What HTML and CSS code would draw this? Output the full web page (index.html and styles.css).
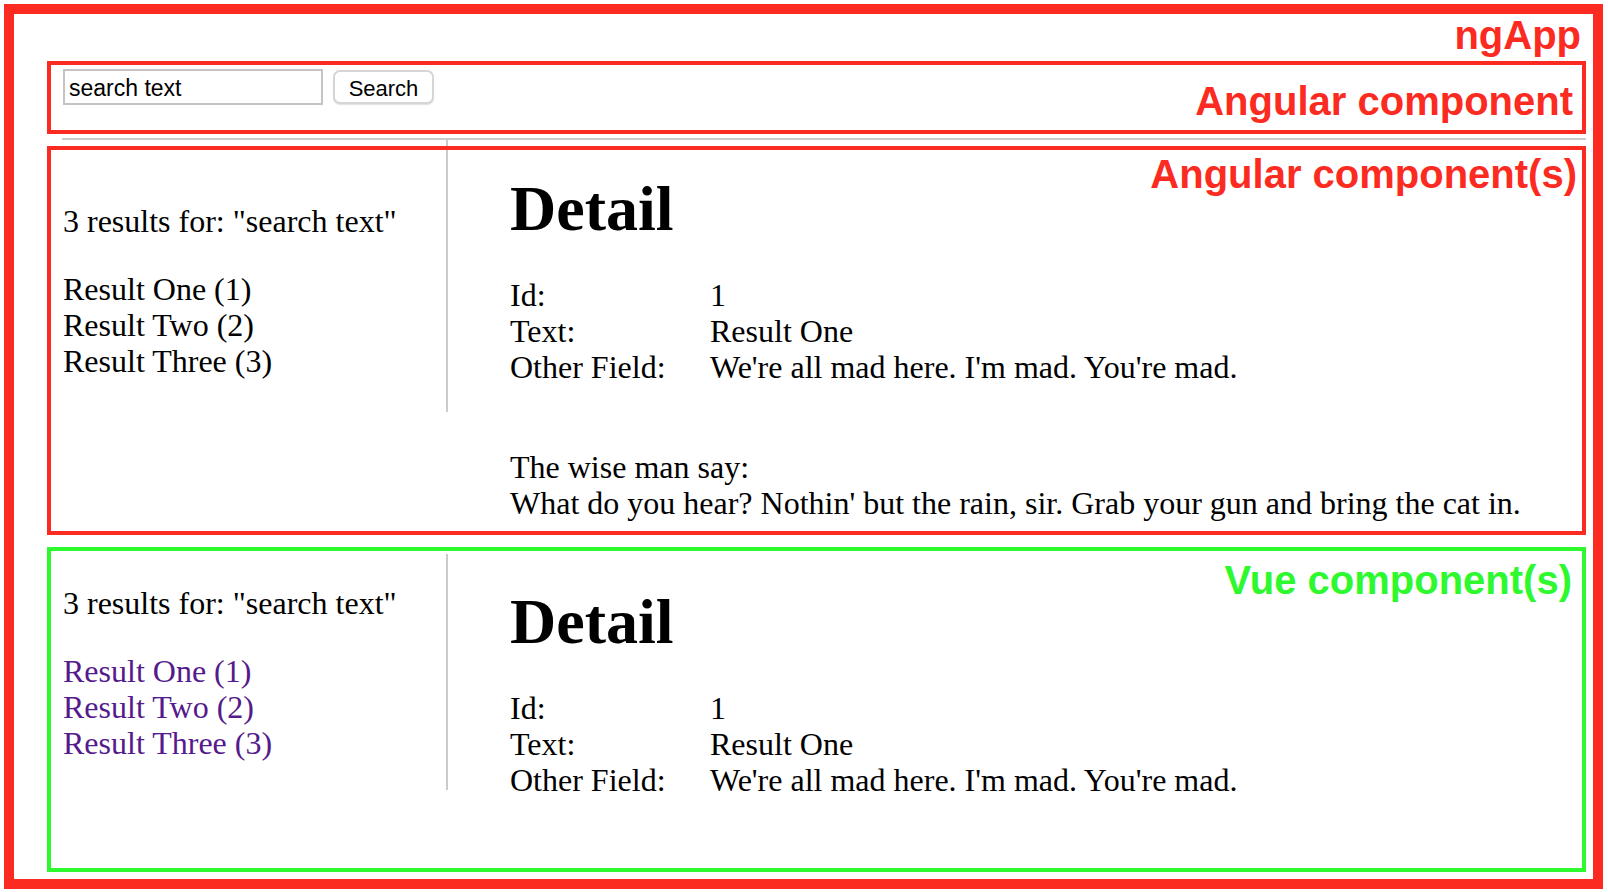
FILE: index.html
```html
<!DOCTYPE html>
<html lang="en">
<head>
<meta charset="utf-8">
<title>ngApp with Angular and Vue components</title>
<link rel="stylesheet" href="styles.css">
</head>
<body>
<div class="ng-app">
  <span class="label label-red label-ngapp">ngApp</span>

  <div class="search-box">
    <span class="label label-red label-search">Angular component</span>
    <div class="search-row">
      <input class="search-input" type="text" value="search text">
      <button class="search-btn" type="button">Search</button>
    </div>
  </div>

  <div class="header-rule"></div>

  <div class="component-box box-angular">
    <span class="label label-red label-angular">Angular component(s)</span>
    <div class="results-layout">
      <aside class="sidebar">
        <p class="summary">3 results for: "search text"</p>
        <ul class="result-list">
          <li>Result One (1)</li>
          <li>Result Two (2)</li>
          <li>Result Three (3)</li>
        </ul>
      </aside>
      <section class="detail">
        <h1 class="detail-title">Detail</h1>
        <div class="fields">
          <span>Id:</span><span>1</span>
          <span>Text:</span><span>Result One</span>
          <span>Other Field:</span><span>We're all mad here. I'm mad. You're mad.</span>
        </div>
        <div class="wise">
          <p>The wise man say:</p>
          <p>What do you hear? Nothin' but the rain, sir. Grab your gun and bring the cat in.</p>
        </div>
      </section>
    </div>
  </div>

  <div class="component-box box-vue">
    <span class="label label-green label-vue">Vue component(s)</span>
    <div class="results-layout">
      <aside class="sidebar">
        <p class="summary">3 results for: "search text"</p>
        <ul class="result-list">
          <li><a class="result-link" href="#1">Result One (1)</a></li>
          <li><a class="result-link" href="#2">Result Two (2)</a></li>
          <li><a class="result-link" href="#3">Result Three (3)</a></li>
        </ul>
      </aside>
      <section class="detail">
        <h1 class="detail-title">Detail</h1>
        <div class="fields">
          <span>Id:</span><span>1</span>
          <span>Text:</span><span>Result One</span>
          <span>Other Field:</span><span>We're all mad here. I'm mad. You're mad.</span>
        </div>
      </section>
    </div>
  </div>
</div>
</body>
</html>
```
FILE: styles.css
```css
html {
  margin: 0;
  padding: 0;
  background: #ffffff;
}

body {
  margin: 0;
  padding: 0;
  font-family: "Liberation Serif", "Times New Roman", serif;
  font-size: 32px;
  line-height: 36px;
  color: #000000;
}

.ng-app {
  position: relative;
  box-sizing: border-box;
  width: 1599px;
  margin: 4px 0 0 4px;
  border: 10px solid #fc2b22;
  padding: 47px 7px 7px 33px;
}

/* annotation labels */
.label {
  position: absolute;
  z-index: 2;
  font-family: "Liberation Sans", Arial, sans-serif;
  font-weight: bold;
  font-size: 40px;
  line-height: 40px;
  white-space: nowrap;
}

.label-red { color: #fc2b22; }
.label-green { color: #2ef82e; }

.label-ngapp { top: 1px; right: 12px; }
.label-search { top: 16px; right: 9px; }
.label-angular { top: 4px; right: 5px; }
.label-vue { top: 9px; right: 10px; }

/* search component */
.search-box {
  position: relative;
  border: 4px solid #fc2b22;
  padding: 4px 12px 25px;
}

.search-row {
  display: flex;
  align-items: center;
  height: 36px;
}

.search-input {
  box-sizing: border-box;
  width: 260px;
  height: 36px;
  margin: 0;
  padding: 3px 4px 0;
  border: 2px solid #c4c4c4;
  border-radius: 0;
  font-family: "Liberation Sans", Arial, sans-serif;
  font-size: 23px;
  color: #000000;
  background: #ffffff;
  outline: none;
}

.search-btn {
  box-sizing: border-box;
  width: 101px;
  height: 34px;
  margin: 0 0 0 10px;
  padding: 3px 0 0;
  border: 2px solid #d6d6d6;
  border-radius: 7px;
  background: #ffffff;
  box-shadow: 0 1px 1px rgba(0, 0, 0, 0.12);
  font-family: "Liberation Sans", Arial, sans-serif;
  font-size: 22px;
  color: #000000;
}

.header-rule {
  height: 2px;
  margin: 4px 0 0 15px;
  background: #cbcbcb;
}

/* result components */
.component-box {
  position: relative;
}

.box-angular {
  margin-top: 6px;
  border: 4px solid #fc2b22;
}

.box-vue {
  margin-top: 12px;
  border: 4px solid #2ef82e;
}

.results-layout {
  display: flex;
  align-items: flex-start;
}

.sidebar {
  position: relative;
  box-sizing: border-box;
  width: 397px;
  flex: none;
  padding-left: 12px;
  border-right: 2px solid #cbcbcb;
}

/* the sidebar rule continues up to the header rule, under the red frame */
.box-angular .sidebar::before {
  content: "";
  position: absolute;
  z-index: -1;
  right: -2px;
  top: -10px;
  width: 2px;
  height: 10px;
  background: #cbcbcb;
}

.box-angular .sidebar {
  height: 262px;
  padding-top: 53px;
}

.box-vue .sidebar {
  height: 236px;
  margin-top: 3px;
  padding-top: 31px;
}

.summary {
  margin: 0;
}

.result-list {
  list-style: none;
  margin: 32px 0 0;
  padding: 0;
}

.result-link {
  color: #551a8b;
  text-decoration: none;
}

.detail {
  flex: 1;
  padding-left: 62px;
}

.box-angular .detail {
  padding-top: 27px;
  padding-bottom: 10px;
}

.box-vue .detail {
  padding-top: 39px;
  padding-bottom: 70px;
}

.detail-title {
  margin: 0 0 36px;
  font-size: 64px;
  line-height: 64px;
  font-weight: bold;
}

.fields {
  display: grid;
  grid-template-columns: 200px auto;
  justify-content: start;
}

.wise {
  margin-top: 64px;
}

.wise p {
  margin: 0;
}
```
